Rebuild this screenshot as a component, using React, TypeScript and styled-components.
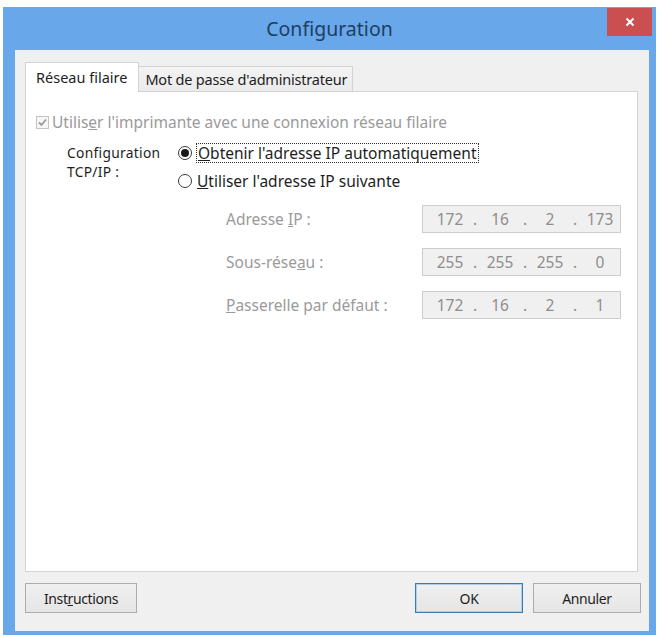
import React, { FC } from "react";
import styled, { createGlobalStyle, css } from "styled-components";

const GlobalStyle = createGlobalStyle`
  html, body {
    margin: 0;
    padding: 0;
    background: #ffffff;
  }
  body {
    font-family: "Noto Sans", "Open Sans", "Liberation Sans", sans-serif;
    font-size: 15.5px;
    color: #1e1e1e;
  }
`;

const Window = styled.div`
  box-sizing: border-box;
  width: 653px;
  height: 628px;
  margin: 7px 0 0 3px;
  background: #69a7eb;
  display: flex;
  flex-direction: column;
`;

const TitleBar = styled.div`
  height: 43px;
  display: grid;
  grid-template-columns: 1fr auto 1fr;
  align-items: start;
`;

const Title = styled.div`
  grid-column: 2;
  font-size: 19.5px;
  line-height: 43px;
  color: #213e60;
`;

const CloseButton = styled.div`
  grid-column: 3;
  justify-self: end;
  margin-right: 4px;
  margin-top: 1px;
  width: 45px;
  height: 28px;
  background: #c94f51;
  display: flex;
  align-items: center;
  justify-content: center;
`;

const Client = styled.div`
  flex: 1;
  margin: 0 7px 4px 12px;
  background: #f0f0f0;
  padding: 12px 11px 18px 10px;
  display: flex;
  flex-direction: column;
`;

const TabStrip = styled.div`
  display: flex;
  align-items: flex-end;
  margin-bottom: -1px;
  position: relative;
  z-index: 1;
`;

const Tab = styled.div<{ $active?: boolean }>`
  box-sizing: border-box;
  border: 1px solid #d3d3d3;
  border-bottom: none;
  display: flex;
  align-items: center;
  font-size: 14.5px;
  color: #1e1e1e;
  ${(p) =>
    p.$active
      ? css`
          height: 30px;
          padding: 0 11px 2px 10px;
          background: #ffffff;
        `
      : css`
          height: 25px;
          padding: 0 5px 0 6px;
          margin-bottom: 1px;
          margin-left: -1px;
          background: linear-gradient(#f3f3f3, #ebebeb);
          letter-spacing: -0.2px;
        `}
`;

const Panel = styled.div`
  flex: 1;
  background: #ffffff;
  border: 1px solid #d3d3d3;
  padding: 20px 0 0 10px;
  display: flex;
  flex-direction: column;
`;

const Row = styled.div`
  display: flex;
  align-items: center;
  height: 20px;
`;

const Label = styled.span<{ $disabled?: boolean }>`
  color: ${(p) => (p.$disabled ? "#9a9a9a" : "#1e1e1e")};
  white-space: nowrap;
`;

const CheckBox = styled.span`
  box-sizing: border-box;
  width: 13px;
  height: 13px;
  border: 1px solid #c4c4c4;
  background: #f6f6f6;
  margin-right: 3px;
  display: flex;
  align-items: center;
  justify-content: center;
`;

const Group = styled.div`
  display: flex;
  margin-top: 11px;
  padding-left: 31px;
`;

const GroupLabel = styled.div`
  width: 111px;
  line-height: 19px;
  font-size: 13.8px;
  letter-spacing: 0.3px;
  color: #1e1e1e;
`;

const Options = styled.div`
  display: flex;
  flex-direction: column;
  gap: 8px;
`;

const Radio = styled.span<{ $checked?: boolean }>`
  box-sizing: border-box;
  width: 14px;
  height: 14px;
  border-radius: 50%;
  border: 1px solid #3a3a3a;
  background: #ffffff;
  margin-right: 5px;
  display: flex;
  align-items: center;
  justify-content: center;
  &::after {
    content: "";
    width: 8px;
    height: 8px;
    border-radius: 50%;
    background: ${(p) => (p.$checked ? "#1a1a1a" : "transparent")};
  }
`;

const Focus = styled.span`
  outline: 1px dotted #333333;
  outline-offset: 0;
  padding: 0 1px;
  line-height: 18px;
`;

const IpList = styled.div`
  display: flex;
  flex-direction: column;
  gap: 15px;
  margin-top: 14px;
  padding-left: 48px;
`;

const IpRow = styled.div`
  display: flex;
  align-items: center;
`;

const IpLabel = styled(Label)`
  width: 196px;
`;

const IpField = styled.div`
  box-sizing: border-box;
  width: 199px;
  height: 28px;
  border: 1px solid #cdcdcd;
  background: #f0f0f0;
  display: flex;
  align-items: center;
  padding-left: 9px;
  color: #8e8e8e;
  font-size: 15.5px;
`;

const Octet = styled.span`
  width: 36px;
  text-align: center;
`;

const Dot = styled.span`
  width: 14px;
  text-align: center;
`;

const Footer = styled.div`
  display: flex;
  align-items: center;
  gap: 10px;
  margin-top: 11px;
  margin-right: -3px;
`;

const Button = styled.div<{ $default?: boolean; $width: number }>`
  box-sizing: border-box;
  width: ${(p) => p.$width}px;
  height: 30px;
  border: 1px solid ${(p) => (p.$default ? "#3d7bad" : "#adadad")};
  box-shadow: ${(p) => (p.$default ? "inset 0 0 0 1px #a9d0f0" : "none")};
  background: linear-gradient(#f0f0f0, #e5e5e5);
  display: flex;
  align-items: center;
  justify-content: center;
  font-size: 14px;
  letter-spacing: -0.4px;
  color: #1e1e1e;
`;

const Spacer = styled.div`
  flex: 1;
`;

const ipRows: { label: React.ReactNode; octets: string[] }[] = [
  {
    label: (
      <>
        Adresse <u>I</u>P :
      </>
    ),
    octets: ["172", "16", "2", "173"],
  },
  {
    label: (
      <>
        Sous-rése<u>a</u>u :
      </>
    ),
    octets: ["255", "255", "255", "0"],
  },
  {
    label: (
      <>
        <u>P</u>asserelle par défaut :
      </>
    ),
    octets: ["172", "16", "2", "1"],
  },
];

const App: FC = () => {
  return (
    <>
      <GlobalStyle />
      <Window>
        <TitleBar>
          <Title>Configuration</Title>
          <CloseButton>
            <svg width="10" height="10" viewBox="0 0 10 10">
              <path d="M1.5 1.5 L8.5 8.5 M8.5 1.5 L1.5 8.5" stroke="#ffffff" strokeWidth="2" />
            </svg>
          </CloseButton>
        </TitleBar>
        <Client>
          <TabStrip>
            <Tab $active>Réseau filaire</Tab>
            <Tab>Mot de passe d'administrateur</Tab>
          </TabStrip>
          <Panel>
            <Row>
              <CheckBox>
                <svg width="9" height="9" viewBox="0 0 9 9">
                  <path d="M1 4.5 L3.5 7 L8 1.5" stroke="#9a9a9a" strokeWidth="1.8" fill="none" />
                </svg>
              </CheckBox>
              <Label $disabled>
                Utilis<u>e</u>r l'imprimante avec une connexion réseau filaire
              </Label>
            </Row>
            <Group>
              <GroupLabel>
                Configuration
                <br />
                TCP/IP :
              </GroupLabel>
              <div>
                <Options>
                  <Row>
                    <Radio $checked />
                    <Focus>
                      <Label>
                        <u>O</u>btenir l'adresse IP automatiquement
                      </Label>
                    </Focus>
                  </Row>
                  <Row>
                    <Radio />
                    <Label>
                      <u>U</u>tiliser l'adresse IP suivante
                    </Label>
                  </Row>
                </Options>
                <IpList>
                  {ipRows.map((r, i) => (
                    <IpRow key={i}>
                      <IpLabel $disabled>{r.label}</IpLabel>
                      <IpField>
                        {r.octets.map((o, j) => (
                          <React.Fragment key={j}>
                            {j > 0 && <Dot>.</Dot>}
                            <Octet>{o}</Octet>
                          </React.Fragment>
                        ))}
                      </IpField>
                    </IpRow>
                  ))}
                </IpList>
              </div>
            </Group>
          </Panel>
          <Footer>
            <Button $width={112}>
              Inst<u>r</u>uctions
            </Button>
            <Spacer />
            <Button $width={108} $default>
              OK
            </Button>
            <Button $width={108}>Annuler</Button>
          </Footer>
        </Client>
      </Window>
    </>
  );
};

export default App;
